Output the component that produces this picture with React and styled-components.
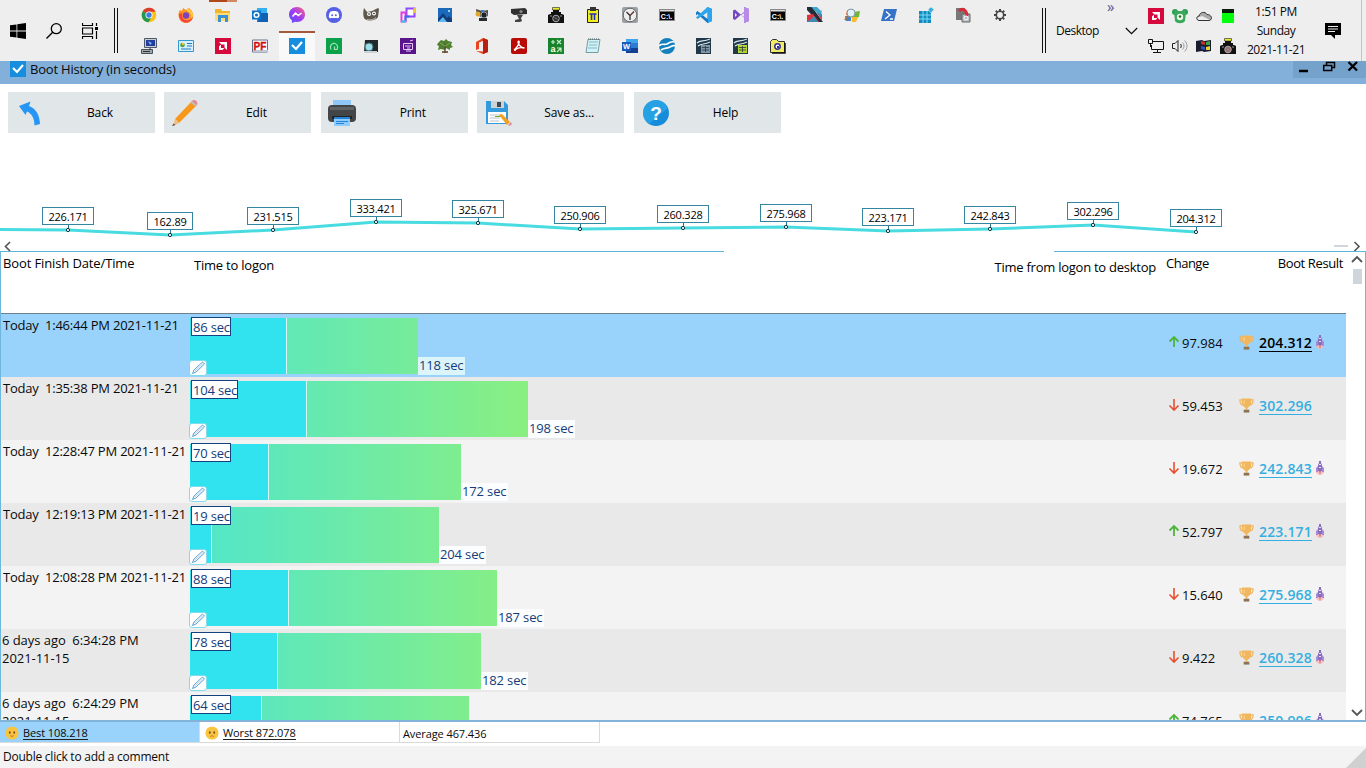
import React from "react";
import styled, { createGlobalStyle, css } from "styled-components";

const Global = createGlobalStyle`
  * { box-sizing: border-box; }
  body { margin: 0; background: #fff; overflow: hidden; }
`;
const Screen = styled.div`
  width: 1366px; height: 768px; overflow: hidden; display: flex; flex-direction: column;
  font-family: "Open Sans", "Noto Sans", sans-serif; color: #0a0a0a; background: #fff; white-space: pre;
`;

/* ---------- taskbar ---------- */
const Taskbar = styled.header`
  height: 61px; flex: none; display: flex; background: #eeeeee;
`;
const StartArea = styled.div`
  width: 114px; padding-left: 10px; display: flex; align-items: center; gap: 20px; flex: none;
`;
const Grip = styled.div`
  width: 4px; height: 45px; margin-top: 8px; flex: none;
  margin-left: ${(p) => p.$gap || 0}px;
  border-left: 1px solid #111; border-right: 1px solid #111;
`;
const Launchers = styled.div`
  margin-left: 12px; width: 888px; flex: none; display: grid;
  grid-template-columns: repeat(24, 37px); grid-template-rows: 31px 30px;
`;
const Launcher = styled.div`
  display: flex; align-items: center; justify-content: center; padding-bottom: 1px;
  ${(p) => p.$open && css`background: linear-gradient(90deg, #b0481a 18px, #d08a64 18px) 0 0 / 100% 2px no-repeat; margin: 0 4px 0 5px;`}
  ${(p) => p.$active && css`background: linear-gradient(#a3583c 2px, #f9f9f9 2px); margin-left: 1px;`}
`;
const DeskToolbar = styled.div`
  width: 98px; flex: none; display: flex; align-items: center; justify-content: space-between;
  padding: 0 6px 0 10px; font-size: 12px; letter-spacing: -0.5px; position: relative;
`;
const Overflow = styled.span`
  position: absolute; left: 61px; top: -4px; font-size: 15px; color: #55558c; line-height: 20px;
`;
const Tray = styled.div`
  width: 98px; flex: none; display: grid; grid-template-columns: repeat(4, 24px);
  grid-template-rows: 31px 30px; place-items: center; padding-bottom: 1px;
`;
const Clock = styled.div`
  width: 68px; flex: none; padding-top: 2px; text-align: center; font-size: 12px; line-height: 19px; letter-spacing: -0.44px;
`;
const Notices = styled.div`
  width: 52px; display: flex; align-items: center; padding-left: 15px; border-right: 1px solid #c4c4c4;
`;

/* ---------- window chrome ---------- */
const TitleBar = styled.div`
  height: 23px; flex: none; background: #82b0da; display: flex; padding-left: 10px; font-size: 13px;
  letter-spacing: -0.2px; line-height: 17px;
`;
const TitleText = styled.span`margin-left: 4px; flex: 1;`;
const WindowControls = styled.div`width: 73px; height: 17px; background: #75a2ca; display: flex;`;
const Toolbar = styled.div`
  height: 49px; flex: none; padding: 8px 0 0 8px; display: flex; gap: 9.4px;
`;
const ToolButton = styled.div`
  width: 147px; height: 41px; background: #e1e6e8; display: flex; align-items: center; padding-left: 7px;
  font-size: 12px; letter-spacing: -0.1px; color: #000;
`;
const ToolLabel = styled.span`flex: 1; text-align: center; padding-left: 3px; margin-right: 1px; line-height: 16px;`;
const ChartPane = styled.div`height: 118px; flex: none;`;

/* ---------- history table ---------- */
const Table = styled.section`
  height: 471px; flex: none; display: flex; flex-direction: column; overflow: hidden;
  border: solid #6fb6de; border-width: 0 1px 2px; border-bottom-color: #82b4d9;
`;
const TopRule = styled.div`height: 1px; flex: none; display: flex; justify-content: space-between;`;
const Rule = styled.div`width: ${(p) => p.$w}px; background: #5fb4de;`;
const TableBody = styled.div`display: flex; flex: 1; min-height: 0;`;
const Main = styled.div`width: 1345px; flex: none; overflow: hidden;`;
const Head = styled.div`
  height: 62px; border-bottom: 1px solid #70808a; display: grid; font-size: 13px; line-height: 18px;
  grid-template-columns: 189px 700px 272px 80px 1fr; color: #000;
`;
const HeadCell = styled.div`
  padding: ${(p) => p.$top}px 4px 0 ${(p) => p.$left || 0}px;
  text-align: ${(p) => (p.$right ? "right" : "left")}; letter-spacing: ${(p) => p.$track}px;
  ${(p) => p.$right && css`padding-right: ${p.$right}px;`}
`;
const Row = styled.div`
  height: 63px; display: grid; grid-template-columns: 189px 977px 71px 1fr;
  background: ${(p) => (p.$selected ? "#99d3fb" : p.$odd ? "#e9e9e9" : "#f3f3f3")};
`;
const When = styled.div`
  padding: 2px 0 0 ${(p) => (p.$wrap ? 1 : 2)}px; font-size: 13px; line-height: 18px;
  letter-spacing: ${(p) => (p.$wrap ? -0.05 : -0.21)}px;
`;
const BarCell = styled.div`position: relative; display: flex; padding-top: 4px;`;
const LogonBar = styled.div`
  width: ${(p) => p.$w}px; height: 56px; background: #30e3ee; border-right: 1px solid #d5f8f5; flex: none;
`;
const DesktopBar = styled.div`
  width: ${(p) => p.$w}px; height: 56px; flex: none;
  background: linear-gradient(90deg, #50e6cc, #8aef80) ${(p) => -p.$from}px 0 / 340px 100%;
`;
const LogonTag = styled.div`
  position: absolute; left: 1px; top: 3px; height: 19px; border: 1px solid #14427e; background: #fff;
  color: #143c7a; font-size: 13px; line-height: 18px; padding: 0 0 0 1px; letter-spacing: -0.2px;
`;
const DesktopTag = styled.div`
  align-self: flex-start; margin-top: 39px; height: 18px; font-size: 13px; line-height: 17px; padding: 0 2px 0 1px;
  color: #143c7a; background: ${(p) => (p.$selected ? "#dcf5fb" : "#fbfdfe")}; letter-spacing: -0.15px;
`;
const EditTag = styled.div`
  position: absolute; left: -1px; top: 46px; width: 18px; height: 16px; border-radius: 3px;
  background: #fff; border: 1px solid #7fdcea; display: flex; align-items: center; justify-content: center;
`;
const Change = styled.div`
  height: 58px; display: flex; align-items: center; gap: 2px; padding-left: 1px; font-size: 13px;
`;
const Result = styled.div`height: 58px; display: flex; align-items: center; padding-left: 1px;`;
const Score = styled.span`
  margin: 0 3px 0 5px; font-size: 14px; line-height: 15px; height: 17px; letter-spacing: 0.15px;
  font-weight: 600; border-bottom: 1px solid;
  color: ${(p) => (p.$selected ? "#000" : "#35afe0")};
`;
const Scroller = styled.div`
  flex: 1; background: #fff; display: flex; flex-direction: column; align-items: center; padding: 3px 0 3px 3px;
`;
const Thumb = styled.div`width: 9px; height: 15px; margin-top: 6px; background: #d0d5db; margin-bottom: auto;`;

/* ---------- bottom ---------- */
const Stats = styled.div`
  height: 24px; flex: none; display: flex; font-size: 11px; line-height: 20px;
`;
const Stat = styled.div`
  width: ${(p) => p.$w}px; height: 21px; display: flex; align-items: center; gap: 4px; padding: 2px 0 0 ${(p) => p.$pad}px;
  background: ${(p) => (p.$best ? "#99d3fb" : "#fff")};
  border: solid #d8dadc; border-width: 0 1px 1px 0; letter-spacing: -0.1px;
`;
const StatText = styled.span`
  line-height: 13px; ${(p) => p.$link && css`border-bottom: 1px solid #222;`}
`;
const Comment = styled.footer`
  height: 22px; flex: none; background: #f3f3f3; padding-left: 3px; font-size: 12px; line-height: 22px;
  letter-spacing: -0.24px; display: flex; justify-content: space-between; align-items: flex-start;
`;

/* ---------- icons ---------- */
const Drawing = styled.svg`display: block; flex: none;`;
const Ic = ({ s = 16, w, h, v = "0 0 16 16", children }) => (
  <Drawing width={w || s} height={h || s} viewBox={v} fill="none">{children}</Drawing>
);
const Glyph = (p) => <text fontFamily="Liberation Sans, sans-serif" fontWeight="700" textAnchor="middle" {...p} />;

const Check = () => <Ic><path fill="#168ddd" d="M0 0h16v16H0z" /><path d="M3 7l4 4 6-7" stroke="#fff" strokeWidth="2.2" /></Ic>;
const Amd = () => <Ic><path fill="#d5093c" d="M0 0h16v16H0z" /><path fill="#fff" d="M4 4h8v8l-2.500-2.500v-3h-3zM4 8.500l2-2v3.500h3.500l-2 2H4z" /></Ic>;
const Camera = ({ lens = "#333" }) => (
  <Ic><path fill="#111" d="M5 5h6V3H5zM0 8l2-1h12l2 1v8H0zM3 5h10v2H3z" /><path fill="#e8ec28" stroke="#222" strokeWidth=".6" d="M4.500 .5h7v2.500h-7z" />
    <circle cx="8" cy="11.500" r="3.300" fill={lens} stroke="#aaa" /><path stroke="#999" d="M2 9h2M12 9h2M7 10.500l2 2" /></Ic>
);
const Console = () => <Ic><path fill="#050505" stroke="#888" d="M.5 2.500h15v11H.5z" /><path fill="#ddd" d="M1 3h14v1.500H1z" /><Glyph x="7.500" y="11.700" fontSize="7" fill="#fff">C:\.</Glyph></Ic>;
const OfficeDoc = ({ c }) => (
  <Ic><path fill="#203848" d="M0 0h15v16H0z" /><path d="M1 5c3-3 6-1 13-4M2 8c4-3 6-1 12-4" stroke="#d8e6ee" strokeWidth="1.200" />
    <path fill={c} d="M5 7h9v8H5z" /><path d="M6 9.500h7M6 12h7M9.500 8v6" stroke="#26394a" strokeWidth=".8" /></Ic>
);

const topIcons = [
  <Ic><circle cx="8" cy="8" r="7.300" fill="#fbc116" /><path fill="#df3a2f" d="M8 8L1.700 4.300A7.300 7.300 0 0 1 14.500 4.800H8z" /><path fill="#23994d" d="M1.700 4.300A7.300 7.300 0 0 0 7.500 15.300L11 9.500 8 8z" /><circle cx="8" cy="8" r="3.500" fill="#fff" /><circle cx="8" cy="8" r="2.700" fill="#3b7de9" /></Ic>,
  <Ic><path fill="#ff9423" d="M2 3l2 1 1-3 3 2 3-2c3 3 5 5 4 9-1 4-4 6-7 6S1 14 .5 9C.3 6 1 4 2 3z" /><path fill="#f34144" d="M1 7c0 6 4 8.500 7 8.500S14 14 15 10c-2 3-5 4-8 3S4 9 4 6z" /><circle cx="8" cy="8.500" r="3.200" fill="#7b43bd" /><path fill="#ffd43e" d="M9 1c4 2 6 5 6 8l-2 2c1-4-1-6-4-7z" /></Ic>,
  <Ic><path fill="#f3b52d" d="M0 2h6l1 2h8v10H0z" /><path fill="#ffdb75" d="M0 6h15v8H0z" /><path fill="#3a91d8" d="M3 8h10v7h-3v-4H6v4H3z" /></Ic>,
  <Ic><path fill="#36b0ee" d="M5 1h10v14H5z" /><path fill="#1061b2" d="M9 6h7v9H5z" /><path fill="#0c73ca" d="M0 3.500h9v9H0z" /><circle cx="4.500" cy="8" r="2.300" stroke="#fff" strokeWidth="1.500" /></Ic>,
  <Ic><defs><linearGradient id="ms" x1="0" y1="1" x2="1" y2="0"><stop stopColor="#5252fb" /><stop offset=".5" stopColor="#a13cf5" /><stop offset="1" stopColor="#ff6378" /></linearGradient></defs><path fill="url(#ms)" d="M8 0c4.600 0 8 3.300 8 7.500S12.600 15 8 15l-2-.3L3 16v-2.600C1 12 0 10 0 7.500 0 3.300 3.400 0 8 0z" /><path d="M3.500 9.500L6.500 6l2.800 2.500L12.500 6" stroke="#fff" strokeWidth="1.500" /></Ic>,
  <Ic><circle cx="8" cy="8" r="8" fill="#5560e5" /><path fill="#fff" d="M4 5c2-1.300 6-1.300 8 0 1 2 1.400 4 1 5.500-1 1-2 1-2.500.2-1.500.4-3.500.4-5 0C5 11.500 4 11.500 3 10.500 2.600 9 3 7 4 5z" /><circle cx="6.200" cy="8.300" r="1" fill="#5560e5" /><circle cx="9.800" cy="8.300" r="1" fill="#5560e5" /></Ic>,
  <Ic><path fill="#5f584f" d="M1 1l3 4 5-1 6-3 1 1-1 8c-2 4-11 5-14 1C0 8 0 5 1 1z" /><circle cx="6" cy="7" r="2" fill="#fff" /><circle cx="11" cy="6.500" r="2" fill="#fff" /><circle cx="6" cy="7" r=".8" fill="#111" /><circle cx="11" cy="6.500" r=".8" fill="#111" /><path d="M4 12.500c4 1 7 0 9-2" stroke="#d8d3cc" strokeWidth=".8" /></Ic>,
  <Ic><path d="M6.500 1.500h8v8h-8z" stroke="#8f48ff" strokeWidth="2" fill="#fff" /><path d="M1.500 5.500h4v9h-4z" stroke="#e43be0" strokeWidth="2" fill="#fff" /><path d="M5.500 14.500v-5h4" stroke="#3a70e8" strokeWidth="2" /><path d="M1 14.500h5" stroke="#2fc8e8" strokeWidth="2" /><path d="M14.500 1v5" stroke="#efce3e" strokeWidth="2" /></Ic>,
  <Ic><path fill="#1a69bb" d="M1 1h14v14H1z" /><path fill="#143c78" d="M1 12l5-6 4 5 2-2 3 3v3H1z" /><path fill="#5db8ef" d="M1 15l5-5 4 5z" /><circle cx="12" cy="4" r="1" fill="#d8efff" /></Ic>,
  <Ic><path fill="#514a43" d="M2 2l6 2 6-1v6l-5 2-6-3z" /><circle cx="4" cy="7" r="2.500" fill="#e0a62f" /><circle cx="10" cy="8" r="3" fill="#222" stroke="#8ca3b5" /><path fill="#262b30" d="M5 11h8v3H5z" /><path fill="#2c80db" d="M7 3h3v2H7z" /></Ic>,
  <Ic><path fill="#303030" d="M0 2l14-1 2 2v4L3 8 0 6z" /><path fill="#444" d="M6 8h6l-2 3 1 3-2 1H4v-2l4-1z" /><circle cx="10" cy="4.500" r="1.600" fill="#888" /></Ic>,
  <Camera />,
  <Ic><path fill="#f4ee1a" stroke="#222" d="M2.500 2.500h11v13h-11z" /><path fill="#333" d="M5 0h6v4H5z" /><path d="M4.500 7h7M6.500 7v6M9.500 7v6" stroke="#2233bb" strokeWidth="1.600" /></Ic>,
  <Ic><rect width="16" height="16" rx="2" fill="#9aa0a4" /><circle cx="8" cy="8" r="6.800" fill="#eceeee" stroke="#666" /><path d="M4.500 5L8 8.500 12 4.500M8 8v5" stroke="#333" strokeWidth="1.300" /><path d="M8 8l3-3" stroke="#d45" strokeWidth=".6" /></Ic>,
  <Console />,
  <Ic><path fill="#1579c5" d="M11.500 0L16 2v12l-4.500 2-10-9L0 8.500v-3L1.500 4l10 8z" /><path fill="#2ca5ec" d="M11.500 0L16 2v12l-4 2V5L1.500 12 0 10.500z" /></Ic>,
  <Ic><path fill="#7648bd" d="M0 3.500l2-1 9 8V0l5 2v12l-5 2V5l-9 8-2-1z" /><path fill="#b98be9" d="M11 0l5 2v12l-5 2z" /><path fill="#eee" d="M2 6l2 2-2 2zM11 6l-3 2 3 2z" /></Ic>,
  <Console />,
  <Ic><path fill="#252e38" d="M0 0h5l11 15h-5L0 3z" /><path fill="#e23038" d="M0 8l6-1 6 8H0z" /><path fill="#d9434c" d="M10 6l5 1v7z" /><path fill="#2299c8" d="M4 0h6l5 5V1l-1 9zM0 15l7-6 4 6z" opacity=".85" /></Ic>,
  <Ic><path fill="#ef6f25" d="M3 3h5v5H2z" /><path fill="#70b736" d="M9 5l7-1-1 6H9z" /><path fill="#4283ca" d="M1 9h6v5H2z" /><path fill="#f6bd2e" d="M8 10h6l-2 5H8z" /><circle cx="7" cy="6" r="4" fill="#e2f1fa" stroke="#8098a8" /><path d="M4 9l-3 4" stroke="#a4743e" strokeWidth="2" /></Ic>,
  <Ic><path fill="#3672c8" d="M3 2h13l-3 12H0z" /><path d="M5 4.500L9 8l-5 4M9 12h3" stroke="#fff" strokeWidth="1.300" /></Ic>,
  <Ic><path fill="#118cbd" d="M1 4h12v12H1z" /><path d="M5 4v12M9 4v12M1 8h12M1 12h12" stroke="#7bdafa" /><path fill="#34aede" stroke="#eee" strokeWidth=".5" d="M13 0l3 2.500L13 6l-3-3.500z" /></Ic>,
  <Ic><path fill="#777" d="M1 1h9v12H1z" /><path fill="#b6bdc4" stroke="#666" d="M7 7h8v8H7z" /><path d="M4 4c4-4 8 0 8 5" stroke="#d72b39" strokeWidth="3" /><circle cx="11" cy="11" r="2" stroke="#fff" /></Ic>,
  <Ic><circle cx="8" cy="8" r="3.700" stroke="#444" strokeWidth="1.600" /><path stroke="#444" strokeWidth="2" d="M8 2v2M8 12v2M2 8h2M12 8h2M3.800 3.800l1.300 1.300M10.900 10.900l1.300 1.300M12.200 3.800l-1.300 1.300M3.800 12.200l1.300-1.300" /></Ic>,
];
const bottomIcons = [
  <Ic><path fill="#c9cdd1" stroke="#4c5968" d="M3.500 .5h12v9h-12z" /><path fill="#253c9d" d="M5 2h9v6H5z" /><path fill="#73b5f4" d="M7 3l4 2-2 2z" /><path fill="#9ea6aa" stroke="#46525e" d="M.5 11.500h11v4H.5z" /><path d="M2 13.500h7M9 10v2" stroke="#333" /></Ic>,
  <Ic><path fill="#d5effc" stroke="#3798cb" d="M.5 2.500h15v11H.5z" /><circle cx="4.500" cy="7" r="2.300" fill="#4aa642" /><path d="M9 5.500h5M9 8h5M3 11h10" stroke="#267abd" /><path fill="#f2c42d" d="M4 5h2v2H4z" /></Ic>,
  <Amd />,
  <Ic><path fill="#fff" stroke="#64718c" d="M.5 2h15v12H.5z" /><path fill="#c0c7d5" d="M1 12h15v2H1z" /><Glyph x="8" y="11.500" fontSize="10" fill="#d01018" stroke="#d01018" strokeWidth=".4">PF</Glyph></Ic>,
  <Check />,
  <Ic><path fill="#0aa14a" d="M0 0h16v16H0z" /><path d="M5 11.500C3 8 6 4.500 9 5.500c3 1 3 4 2 6H8.500V8.500" stroke="#a5e0b8" strokeWidth="1.200" /></Ic>,
  <Ic><path fill="#20282b" d="M2 2h13v12H1z" /><circle cx="6" cy="9" r="4" fill="#9bdcea" stroke="#436b75" /><path fill="#ccd4d8" d="M1 13h13v2H1z" /></Ic>,
  <Ic><path fill="#5b158c" d="M0 0h16v16H0z" /><path d="M3.500 5.500h9v6h-9zM6 13h5M10 3l3-1" stroke="#e7c9f6" /><path d="M5 8h6M7 10h3" stroke="#e7c9f6" /></Ic>,
  <Ic><path fill="#4d812d" d="M1 5l3-3 3 1 2-2 2 2 4 1-1 3 2 2-3 1v2L9 10l-1 2-4-1-3 1 1-4-2-1z" /><path d="M8 6v9M5 14h6" stroke="#594222" strokeWidth="1.300" /><path d="M3 5l5 3 5-3" stroke="#8aa65a" /></Ic>,
  <Ic><path fill="#e84520" d="M2 4l7-4 5 2v12l-5 2-7-3 7 .5V3L5 4.500V11l-3 1z" /><path fill="#b91e13" d="M9 0l5 2v12l-5 2z" /></Ic>,
  <Ic><rect width="16" height="16" rx="2" fill="#b90a05" /><path d="M7.500 3c2 0-.5 6-4.500 9M7.500 3c-1.500 2 2 7 6 7-4-1-8 0-10 3" stroke="#fff" strokeWidth="1.300" /></Ic>,
  <Ic><path fill="#17842b" d="M0 0h16v16H0z" /><path d="M3 4h4M5 2v4M9 2l4 4M13 2L9 6M9 10h4v4M9 14l4-4" stroke="#c6eeca" strokeWidth="1.200" /><Glyph x="5" y="14" fontSize="9" fill="#fff">a</Glyph></Ic>,
  <Ic><path fill="#d4f2f5" stroke="#739da5" d="M3 1.500h12l-2 13H1z" /><path d="M4 4h9M4 7h8M3 10h9" stroke="#7abac7" /><path d="M3 1h12" stroke="#566" strokeDasharray="1 1" /></Ic>,
  <Ic><path fill="#41a5ee" d="M4 1h12v5H4z" /><path fill="#2b7cd3" d="M4 5h12v5H4z" /><path fill="#173f91" d="M4 10h12v5H4z" /><path fill="#185abd" d="M0 4h9v9H0z" /><Glyph x="4.500" y="11" fontSize="7.500" fill="#fff">W</Glyph></Ic>,
  <Ic><circle cx="8" cy="8" r="8" fill="#147fbd" /><path d="M0 8c3-3 5-1 8-2 3-2 4-3 7-2M2 12c4-3 6-1 9-3 2-1 3-2 5-1" stroke="#fff" strokeWidth="1.700" /></Ic>,
  <OfficeDoc c="#8195a5" />,
  <OfficeDoc c="#b8d52d" />,
  <Ic><path fill="#f0ec65" stroke="#333" d="M.5 3.500l2-2h4l2 2h6v11H.5z" /><path stroke="#111" strokeWidth="1.500" d="M15 5v10H2" /><circle cx="7.500" cy="8.500" r="2.700" fill="#fff" stroke="#343094" strokeWidth="1.500" /><path fill="#343094" d="M7 8h2v2H7z" /></Ic>,
];
const trayIcons = [
  <Amd />,
  <Ic><circle cx="3" cy="4" r="3" fill="#2d9f52" /><circle cx="13" cy="4" r="3" fill="#2d9f52" /><path fill="#38a85b" d="M2 3h12l-1 10c-2 3-8 3-10 0z" /><circle cx="8" cy="9" r="3.200" fill="#e8f5df" /><circle cx="8" cy="8.500" r="1.200" fill="#263" /></Ic>,
  <Ic><path fill="#aaa" stroke="#333" d="M3 12.500c-3-.5-3-4 0-4.500 1-4 6-5 8-1.500 5 0 6 5.500 2 6z" /><path fill="#eee" d="M1 10l5-2 8 4H3z" /></Ic>,
  <Ic><path fill="#00ff0c" d="M2 1h12v14H2z" /><path fill="#0a1b0d" d="M2 1h12v4H2z" /></Ic>,
  <Ic><path stroke="#111" d="M5 3.500h10.500v8H3.500V7M9.500 11v4M5 14.500h8M.5 1.500h4v4h-4zM2.500 6v3" /></Ic>,
  <Ic><path stroke="#222" d="M.5 5.500H3l3-3v11l-3-3H.5zM8.500 6c1 1 1 3 0 4" /><path stroke="#999" d="M10.500 4.500c2 2 2 5 0 7M12.500 2.500c3.300 3 3.300 8 0 11" /></Ic>,
  <Ic><path fill="#181c2c" d="M0 3l6-1 2 1 7-1v11l-7 1-2-1-6 1z" /><path fill="#c9302c" d="M5 3l4 1v3L5 6z" /><path fill="#37a849" d="M10 4l4-1v4h-4z" /><path fill="#3451cc" d="M5 8l4 1v3l-4-1z" /><path fill="#e5d32e" d="M10 9l4-1v4h-4z" /></Ic>,
  <Camera lens="#9c6d70" />,
];

const tools = [
  ["Back", <Ic s={28} v="0 0 28 28"><path fill="#2695f3" d="M4 7L15.500 2.500 14 7C21.500 10 24.500 16 25 25l-5.500 1.500C19.500 19 16.500 14.500 12 12.500L10.500 16z" /></Ic>],
  ["Edit", <Ic s={28} v="0 0 28 28"><path fill="#f7981d" d="M4 20L21 2l5 4L8 24z" /><path fill="#f0bd86" d="M4 20l4 4-6 3z" /><path fill="#505050" d="M2.500 24.500l2 1.500L1 27z" /><path fill="#b9c0c4" d="M19.500 3.500L21 2l5 4-1.500 1.500z" /><path fill="#ea8490" d="M21 2c2-3 7 1 5 4z" /></Ic>],
  ["Print", <Ic s={28} v="0 0 28 28"><path fill="#91c7f8" d="M5 1h18v8H5z" /><rect y="6" width="28" height="17" rx="4" fill="#434547" /><path fill="#606365" d="M2 8h24v3H2z" /><path fill="#222" d="M4 17h20v3H4z" /><path fill="#8ecbff" d="M6 18h16v9H6z" /><path fill="#2283d8" d="M6 18h16v2H6zM8 22h12v1H8zM8 24h8v1H8z" /></Ic>],
  ["Save as...", <Ic s={28} v="0 0 28 28"><path fill="#329add" d="M2 2h18l4 4v19H2z" /><path fill="#cdd2d5" d="M7 2h13v7H7z" /><path fill="#3f4a52" d="M13 3h4v5h-4z" /><path fill="#fff" d="M4 13h18v11H4z" /><path stroke="#bcc2c5" d="M6 16h12M6 19h10M6 22h9" /><path fill="#6aae35" d="M11 17h8v1h-8z" /><path fill="#f3a021" d="M15 16l3-1 8 8-3 3z" /><path fill="#e58d9a" d="M24 26l3-3 1 2-2 2z" /></Ic>],
  ["Help", <Ic s={28} v="0 0 28 28"><circle cx="15" cy="14" r="13" fill="#168ddb" /><path fill="#36b7ee" d="M2 13A13 13 0 0 1 27 9L8 25C4 23 2 18 2 13z" opacity=".5" /><Glyph x="15" y="21" fontSize="19" fill="#fff">?</Glyph></Ic>],
];

const points = [
  [68, 230, "226.171"], [170, 235, "162.89"], [273, 230, "231.515"], [376, 222, "333.421"], [478, 223, "325.671"], [580, 229, "250.906"],
  [683, 228, "260.328"], [786, 227, "275.968"], [888, 231, "223.171"], [990, 229, "242.843"], [1093, 225, "302.296"], [1196, 232, "204.312"],
];
function Chart() {
  return (
    <Ic w={1366} h={118} v="0 133 1366 118">
      <polyline points={"0,229.500 " + points.map(([x, y]) => `${x},${y}`).join(" ")} stroke="#48dbe0" strokeWidth="3" />
      {points.map(([x, y, t]) => {
        const w = t.length < 7 ? 45 : 51;
        return (
          <g key={x}>
            <path d={`M${x + 0.5} ${y - 6}v5`} stroke="#2c7894" />
            <circle cx={x} cy={y} r="1.600" fill="#fff" stroke="#0b3038" />
            <rect x={x - (w + 1) / 2 + 0.5} y={y - 22.5} width={w} height="17" fill="#fff" stroke="#3486a0" />
            <text x={x} y={y - 9.5} textAnchor="middle" fontSize="11" letterSpacing="-0.2" fill="#000">{t}</text>
          </g>
        );
      })}
      <path d="M10 242l-4.500 4.500L10 251M1354.500 242l4.500 4.500-4.500 4.500" stroke="#555" strokeWidth="1.600" />
      <path d="M1334 246h14" stroke="#cfd6de" strokeWidth="2" />
    </Ic>
  );
}

const rows = [
  { when: "Today  1:46:44 PM 2021-11-21", logon: 86, desk: 118, a: 97, b: 228, up: true, change: "97.984", score: "204.312", rocket: true },
  { when: "Today  1:35:38 PM 2021-11-21", logon: 104, desk: 198, a: 117, b: 338, change: "59.453", score: "302.296" },
  { when: "Today  12:28:47 PM 2021-11-21", logon: 70, desk: 172, a: 79, b: 271, change: "19.672", score: "242.843", rocket: true },
  { when: "Today  12:19:13 PM 2021-11-21", logon: 19, desk: 204, a: 22, b: 249, up: true, change: "52.797", score: "223.171", rocket: true },
  { when: "Today  12:08:28 PM 2021-11-21", logon: 88, desk: 187, a: 99, b: 307, change: "15.640", score: "275.968", rocket: true },
  { when: "6 days ago  6:34:28 PM\n2021-11-15", logon: 78, desk: 182, a: 88, b: 291, change: "9.422", score: "260.328", rocket: true },
  { when: "6 days ago  6:24:29 PM\n2021-11-15", logon: 64, a: 72, b: 279, up: true, change: "74.765", score: "250.906", rocket: true },
];
const Arrow = ({ up }) => (
  <Ic w={12} h={16} v="0 -1 12 16">
    {up ? <path d="M6 11V1M1.500 5.500L6 1l4.500 4.500" stroke="#4db53c" strokeWidth="1.800" /> : <path d="M6 0v11M1.500 6.500L6 11l4.500-4.500" stroke="#e84f31" strokeWidth="1.600" />}
  </Ic>
);
const Trophy = () => (
  <Ic w={15} h={16}><path fill="#f1b75f" d="M3 0h10v4c0 3-2 5-4 6v2H7v-2C5 9 3 7 3 4z" /><path d="M3 1.500H1c0 4 1 5 3 5.500M13 1.500h2c0 4-1 5-3 5.500" stroke="#edb461" strokeWidth="1.300" /><path fill="#8b7355" d="M5 12h6v3H5z" /><path d="M5.500 2v4" stroke="#ffdc98" /></Ic>
);
const Rocket = () => (
  <Ic w={10} h={18} v="0 0 10 18"><path fill="#f6b8b8" d="M1 10h8v3l-3 2H4l-3-2z" opacity=".8" /><path fill="#8a6cc0" d="M4 1h2v2l1 2v6H3V5l1-2z" /><path fill="#a48bd2" d="M3 6L1 8v4h2zM7 6l2 2v4H7z" /><path fill="#e2e2f8" d="M4 4h2v1H4zM4 7h2v1H4z" /><path fill="#dc6670" d="M4 11h2l-1 4z" /></Ic>
);
const Pen = () => <Ic w={15} h={14} v="0 0 15 14"><path d="M1.500 12.500L3 9l8.500-8 2 2L5 11z" stroke="#5b9fd0" /><path d="M4 10l8-7.500" stroke="#8fc4e6" strokeWidth=".7" /></Ic>;
const Face = ({ sad }) => (
  <Ic s={14}><circle cx="8" cy="8" r="7.500" fill="#f9c440" /><ellipse cx="5.500" cy="7.500" rx="1" ry="1.500" fill="#7b4c28" /><ellipse cx="10.500" cy="7.500" rx="1" ry="1.500" fill="#7b4c28" /><path d={sad ? "M6 12c1-1 3-1 4 0" : "M6 11c1 1 3 1 4 0"} stroke="#a66a24" /></Ic>
);
const Chevron = ({ up }) => <Ic w={12} h={8} v="0 0 12 8"><path d={up ? "M1 7l5-5 5 5" : "M1 1l5 5 5-5"} stroke="#555" strokeWidth="1.800" /></Ic>;

export default function App() {
  return (
    <Screen>
      <Global />
      <Taskbar>
        <StartArea>
          <Ic><path fill="#000" d="M0 2.300L6.500 1.400v6.100H0zM7.300 1.300L16 0v7.500H7.300zM0 8.400h6.500v6.200L0 13.700zM7.300 8.400H16V16l-8.700-1.300z" /></Ic>
          <Ic><circle cx="10.300" cy="5.700" r="5" stroke="#000" strokeWidth="1.300" /><path d="M6.700 9.300L.5 15.500" stroke="#000" strokeWidth="1.300" /></Ic>
          <Ic><path d="M.5 0v2.500h10V0M.5 5h10v6H.5zM.5 16v-2.500h10V16M14.500 0v3M14.500 8v8" stroke="#000" strokeWidth="1.200" /><path fill="#000" d="M13 4h3v3h-3z" /></Ic>
        </StartArea>
        <Grip />
        <Launchers>
          {topIcons.map((icon, i) => <Launcher key={i} $open={i === 2}>{icon}</Launcher>)}
          {bottomIcons.map((icon, i) => <Launcher key={"b" + i} $active={i === 4}>{icon}</Launcher>)}
        </Launchers>
        <Grip $gap={24} />
        <DeskToolbar>
          <span>Desktop</span><Overflow>»</Overflow>
          <Ic w={13} h={8} v="0 0 13 8"><path d="M.8 1l5.700 5.700L12.200 1" stroke="#111" strokeWidth="1.300" /></Ic>
        </DeskToolbar>
        <Tray>{trayIcons.map((icon, i) => <React.Fragment key={i}>{icon}</React.Fragment>)}</Tray>
        <Clock><div>1:51 PM</div><div>Sunday</div><div>2021-11-21</div></Clock>
        <Notices><Ic><path fill="#000" d="M0 0h16v12H10v4l-4-4H0z" /><path d="M3 3.500h10M3 6h10M3 8.500h7" stroke="#eee" /></Ic></Notices>
      </Taskbar>
      <TitleBar>
        <Check /><TitleText>Boot History (in seconds)</TitleText>
        <WindowControls>
          <Ic w={73} h={17} v="1293 61 73 17"><path d="M1299 71h9" stroke="#000" strokeWidth="2.500" /><path d="M1323.700 65.500h8v5h-8zM1326.500 65v-2.500h8v5h-3" stroke="#000" strokeWidth="1.500" /><path d="M1348.500 62l8.500 8.500M1357 62l-8.500 8.500" stroke="#000" strokeWidth="2.300" /></Ic>
        </WindowControls>
      </TitleBar>
      <Toolbar>{tools.map(([name, icon]) => <ToolButton key={name}>{icon}<ToolLabel>{name}</ToolLabel></ToolButton>)}</Toolbar>
      <ChartPane><Chart /></ChartPane>
      <Table>
        <TopRule><Rule $w={723} /><Rule $w={311} /></TopRule>
        <TableBody>
          <Main>
            <Head>
              <HeadCell $top={2} $left={2} $track={-0.12}>Boot Finish Date/Time</HeadCell>
              <HeadCell $top={4} $left={4} $track={-0.22}>Time to logon</HeadCell>
              <HeadCell $top={6} $right={6} $track={-0.25}>Time from logon to desktop</HeadCell>
              <HeadCell $top={2} $left={4} $track={-0.5}>Change</HeadCell>
              <HeadCell $top={2} $right={3} $track={-0.38}>Boot Result</HeadCell>
            </Head>
            {rows.map((r, i) => (
              <Row key={r.when} $selected={i === 0} $odd={i % 2 === 1}>
                <When $wrap={i > 4}>{r.when}</When>
                <BarCell>
                  <LogonBar $w={r.a} /><DesktopBar $w={r.b - r.a} $from={r.a} />
                  {r.desk && <DesktopTag $selected={i === 0}>{r.desk} sec</DesktopTag>}
                  <LogonTag>{r.logon} sec</LogonTag>
                  <EditTag><Pen /></EditTag>
                </BarCell>
                <Change><Arrow up={r.up} />{r.change}</Change>
                <Result><Trophy /><Score $selected={i === 0}>{r.score}</Score>{r.rocket && <Rocket />}</Result>
              </Row>
            ))}
          </Main>
          <Scroller><Chevron up /><Thumb /><Chevron /></Scroller>
        </TableBody>
      </Table>
      <Stats>
        <Stat $w={200} $pad={5} $best><Face /><StatText $link>Best 108.218</StatText></Stat>
        <Stat $w={200} $pad={5}><Face sad /><StatText $link>Worst 872.078</StatText></Stat>
        <Stat $w={200} $pad={3}><StatText>Average 467.436</StatText></Stat>
      </Stats>
      <Comment>Double click to add a comment<Ic w={20} h={22} v="0 0 20 22"><path fill="#d0d0d0" d="M20 2v20H0z" /></Ic></Comment>
    </Screen>
  );
}
